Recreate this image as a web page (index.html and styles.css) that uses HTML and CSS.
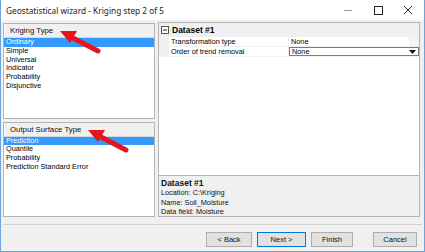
FILE: index.html
```html
<!DOCTYPE html>
<html lang="en">
<head>
    <meta charset="UTF-8">
    <title>Geostatistical wizard - Kriging step 2 of 5</title>
    <link rel="stylesheet" href="styles.css">
</head>
<body>
<div id="window">
    <div class="titlebar">
        <span class="title">Geostatistical wizard - Kriging step 2 of 5</span>
        <div class="controls">
            <svg class="ctl" width="30" height="20" viewBox="0 0 30 20"><path d="M11 10.5h8" stroke="#999" stroke-width="1"/></svg>
            <svg class="ctl" width="30" height="20" viewBox="0 0 30 20"><rect x="11.5" y="6.5" width="8" height="8" fill="none" stroke="#222" stroke-width="1"/></svg>
            <svg class="ctl" width="30" height="20" viewBox="0 0 30 20"><path d="M11 6l8 8M19 6l-8 8" stroke="#222" stroke-width="1"/></svg>
        </div>
    </div>

    <div class="content">
        <div class="left">
            <div class="listbox">
                <div class="list-header">Kriging Type</div>
                <ul class="list">
                    <li class="selected">Ordinary</li>
                    <li>Simple</li>
                    <li>Universal</li>
                    <li>Indicator</li>
                    <li>Probability</li>
                    <li>Disjunctive</li>
                </ul>
            </div>
            <div class="listbox">
                <div class="list-header">Output Surface Type</div>
                <ul class="list">
                    <li class="selected">Prediction</li>
                    <li>Quantile</li>
                    <li>Probability</li>
                    <li>Prediction Standard Error</li>
                </ul>
            </div>
        </div>

        <div class="right">
            <div class="grid">
                <div class="category">
                    <span class="toggle">
                        <svg width="8" height="8" viewBox="0 0 8 8"><rect x="0.5" y="0.5" width="7" height="7" fill="#fff" stroke="#555"/><path d="M2 4h4" stroke="#222"/></svg>
                    </span>
                    <span class="cat-name">Dataset #1</span>
                </div>
                <div class="prop">
                    <span class="prop-name">Transformation type</span>
                    <span class="prop-value">None<span class="dim-btn"></span></span>
                </div>
                <div class="prop">
                    <span class="prop-name">Order of trend removal</span>
                    <span class="prop-value combo">None
                        <svg class="arrow" width="7" height="4" viewBox="0 0 7 4"><path d="M0 0h7L3.5 4z" fill="#111"/></svg>
                    </span>
                </div>
                <div class="grid-fill"></div>
            </div>
            <div class="description">
                <div class="desc-title">Dataset #1</div>
                <div>Location: C:\Kriging</div>
                <div>Name: Soil_Moisture</div>
                <div>Data field: Moisture</div>
            </div>
        </div>
    </div>

    <div class="footer">
        <button class="back">&lt; Back</button>
        <button class="default">Next &gt;</button>
        <button class="finish">Finish</button>
        <button class="cancel">Cancel</button>
    </div>

    <svg class="pointer one" width="50" height="30" viewBox="0 0 50 30">
        <path d="M39 22L12 8" stroke="#e8141b" stroke-width="5" stroke-linecap="round"/>
        <path d="M1 2l17 0-7 12z" fill="#e8141b"/>
    </svg>
    <svg class="pointer two" width="50" height="30" viewBox="0 0 50 30">
        <path d="M39 22L12 8" stroke="#e8141b" stroke-width="5" stroke-linecap="round"/>
        <path d="M1 2l17 0-7 12z" fill="#e8141b"/>
    </svg>
</div>
</body>
</html>
```

FILE: styles.css
```css
* {
    box-sizing: border-box;
}

body {
    margin: 0;
    font-family: "Liberation Sans", Arial, sans-serif;
    color: #000;
    background: #fff;
}

#window {
    position: relative;
    width: 425px;
    height: 252px;
    background: #f0f0f0;
    border: 1px solid #6fa3dc;
    border-top: none;
    display: flex;
    flex-direction: column;
    overflow: hidden;
}

.titlebar {
    height: 20px;
    background: #fff;
    display: flex;
    align-items: center;
    justify-content: space-between;
    padding-left: 5px;
}

.title {
    font-family: "Noto Sans", sans-serif;
    font-size: 8.3px;
    color: #222;
}

.controls {
    display: flex;
    padding-right: 1px;
}

.ctl {
    display: block;
}

.content {
    display: flex;
    gap: 3px;
    padding: 2px 4px 0 2px;
    height: 197px;
}

.left {
    width: 152px;
    display: flex;
    flex-direction: column;
    gap: 3px;
    padding-top: 1px;
}

.listbox {
    flex: 1;
    border: 1px solid #b4b4b4;
    background: #fff;
    display: flex;
    flex-direction: column;
}

.list-header {
    height: 14px;
    background: #f0f0f0;
    border-bottom: 1px solid #d6d6d6;
    border-left: 1px solid #fff;
    font-size: 7.8px;
    line-height: 13px;
    padding-left: 5px;
    color: #111;
}

.list {
    list-style: none;
    margin: 0;
    padding: 0;
    font-size: 7.3px;
    line-height: 8.8px;
}

.list li {
    padding-left: 2px;
}

.list li.selected {
    background: #3399ff;
    color: #fff;
}

.right {
    flex: 1;
    display: flex;
    flex-direction: column;
    border: 1px solid #b4b4b4;
}

.grid {
    flex: 1;
    background: #fff;
    display: flex;
    flex-direction: column;
    font-size: 7.3px;
}

.category {
    height: 14px;
    background: #f0f0f0;
    display: flex;
    align-items: center;
}

.toggle {
    width: 10px;
    display: flex;
    justify-content: center;
    padding-left: 1px;
}

.cat-name {
    font-weight: bold;
    font-size: 8.5px;
    padding-left: 3px;
}

.prop {
    height: 10px;
    display: flex;
    border-left: 10px solid #f0f0f0;
    border-bottom: 1px solid #f0f0f0;
    line-height: 9px;
}

.prop-name {
    width: 120px;
    padding-left: 2px;
    border-right: 1px solid #f0f0f0;
}

.prop-value {
    flex: 1;
    display: flex;
    padding-left: 2px;
}

.dim-btn {
    margin-left: auto;
    width: 10px;
    background: #f4f4f4;
}

.combo {
    border: 1px solid #7a7a7a;
    line-height: 8px;
    align-items: center;
}

.arrow {
    margin-left: auto;
    margin-right: 2px;
}

.grid-fill {
    flex: 1;
}

.description {
    height: 41px;
    border-top: 1px solid #b4b4b4;
    padding: 3px 2px 0;
    font-size: 7.3px;
    color: #111;
}

.description div {
    height: 9.3px;
    line-height: 9.3px;
}

.description .desc-title {
    font-weight: bold;
    font-size: 8.5px;
}

.footer {
    margin: 7px 2px 0;
    border-top: 1px solid #d0d0d0;
    display: flex;
    justify-content: flex-end;
    padding: 7px 5px 0 0;
    gap: 5px;
}

.footer button {
    width: 46px;
    height: 15px;
    padding: 0;
    font-family: "Liberation Sans", Arial, sans-serif;
    font-size: 7.5px;
    color: #111;
    background: #e1e1e1;
    border: 1px solid #adadad;
}

.footer button.default {
    width: 49px;
    border-color: #0078d7;
}

.footer button.finish {
    width: 42px;
}

.footer button.cancel {
    width: 44px;
    margin-left: 15px;
}

.pointer {
    position: absolute;
}

.pointer.one {
    left: 58px;
    top: 29px;
}

.pointer.two {
    left: 86px;
    top: 128px;
}
```
